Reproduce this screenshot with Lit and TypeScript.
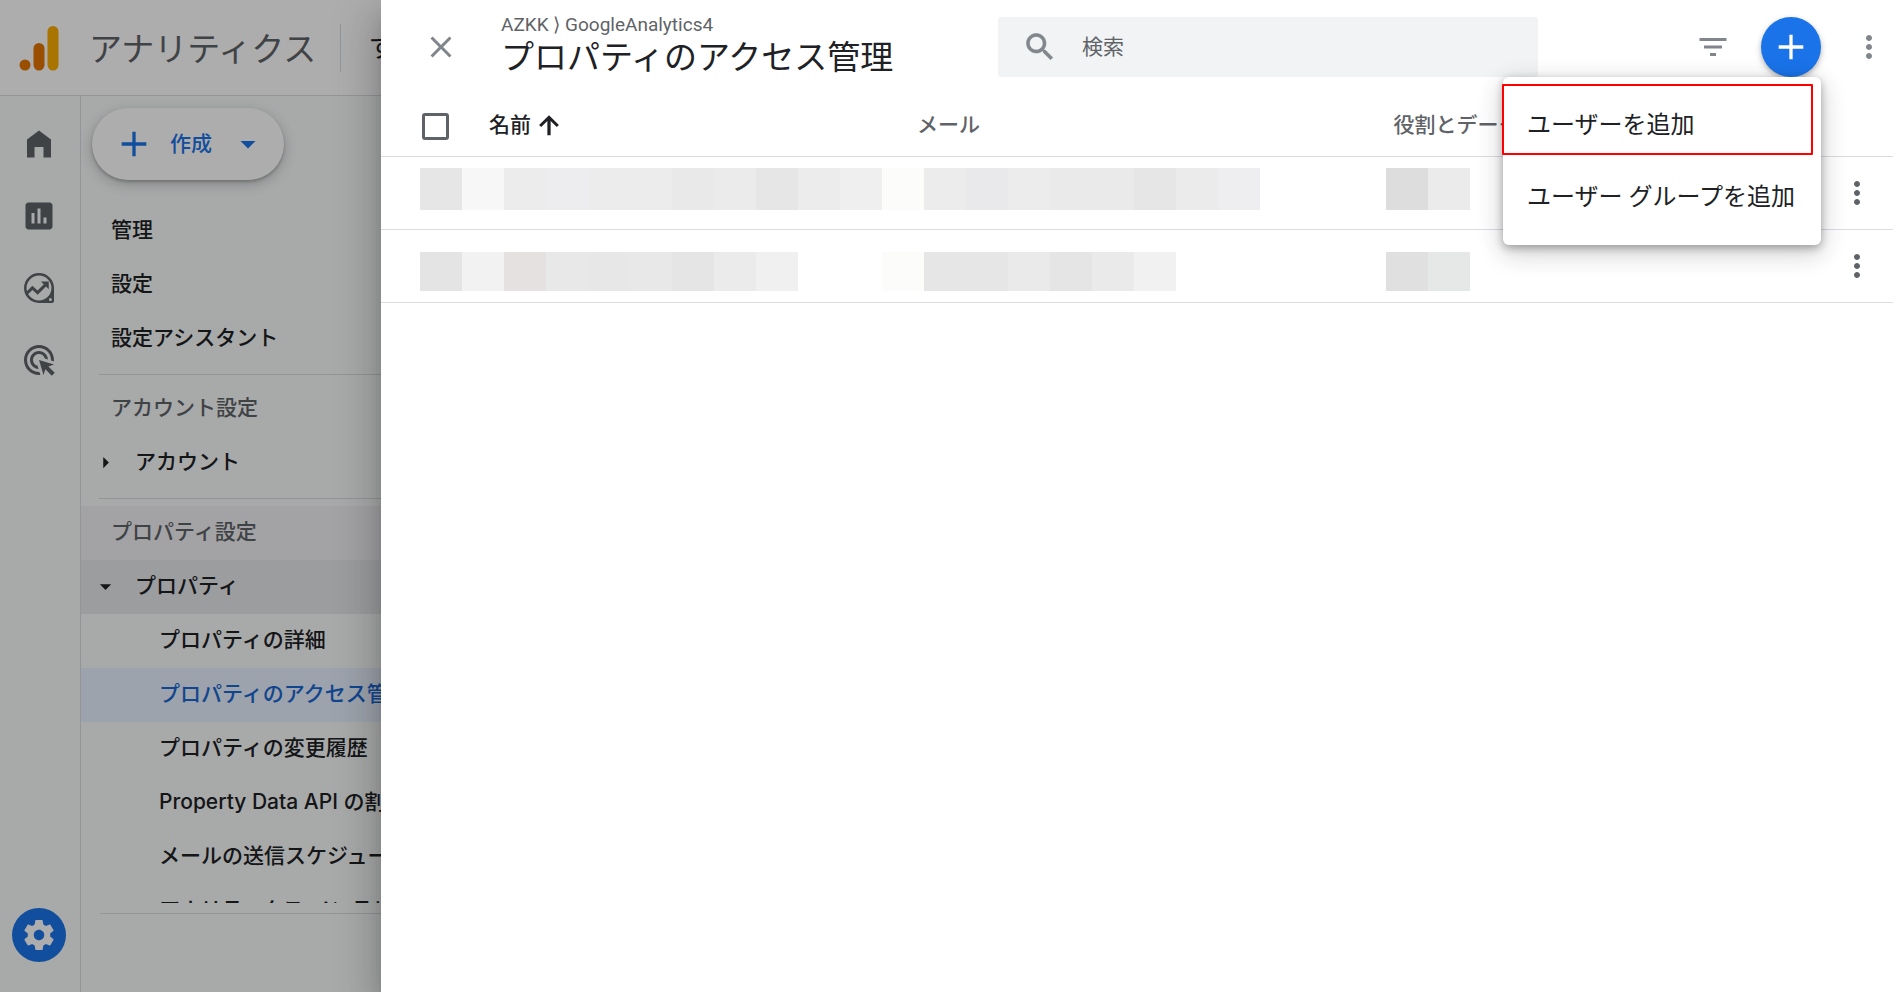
import { LitElement, html, css, svg } from "lit";
import { customElement, property, state } from "lit/decorators.js";
import { classMap } from "lit/directives/class-map.js";
import { styleMap } from "lit/directives/style-map.js";

const ICONS = {
  home: svg`<path d="M4 21V9l8-6 8 6v12h-5v-7H9v7z"/>`,
  reports: svg`<path d="M19 3H5c-1.1 0-2 .9-2 2v14c0 1.1.9 2 2 2h14c1.1 0 2-.9 2-2V5c0-1.1-.9-2-2-2zM9 17H7v-7h2v7zm4 0h-2V7h2v10zm4 0h-2v-4h2v4z"/>`,
  explore: svg`<path fill-rule="evenodd" d="M12 2a10 10 0 0 1 10 10v8.600a1.400 1.400 0 0 1-1.400 1.400H12a10 10 0 0 1 0-20zM12 3.700a8.300 8.300 0 1 0 0 16.600 8.300 8.300 0 0 0 0-16.600zM19.600 18.600a1 1 0 1 0 0 2 1 1 0 0 0 0-2z"/><path d="M4 15.500l3.600-3.600 3.500 3.200 5-5" fill="none" stroke="currentColor" stroke-width="2"/><path d="M13.300 7.700h5.200v5.200z"/>`,
  ads: svg`<path d="M11.71,17.99C8.53,17.84,6,15.22,6,12c0-3.310,2.690-6,6-6c3.220,0,5.840,2.530,5.990,5.710l-2.100-0.630C15.480,9.310,13.890,8,12,8c-2.210,0-4,1.790-4,4c0,1.890,1.310,3.480,3.080,3.890L11.710,17.990z M22,12c0,0.300-0.010,0.600-0.040,0.900l-1.970-0.590C20,12.210,20,12.100,20,12c0-4.420-3.580-8-8-8s-8,3.580-8,8s3.580,8,8,8c0.100,0,0.210,0,0.310-0.010l0.590,1.970C12.600,21.990,12.300,22,12,22C6.480,22,2,17.520,2,12C2,6.480,6.480,2,12,2S22,6.480,22,12z M18.230,16.260L22,15l-10-3l3,10l1.260-3.770l4.270,4.270l1.980-1.980L18.230,16.260z"/>`,
  settings: svg`<path d="M19.43 12.98c.04-.32.07-.64.07-.98s-.03-.66-.07-.98l2.110-1.650c.19-.15.24-.42.12-.64l-2-3.460c-.12-.22-.39-.3-.61-.22l-2.490 1c-.52-.4-1.080-.73-1.690-.98l-.38-2.650C14.460 2.180 14.250 2 14 2h-4c-.25 0-.46.18-.49.42l-.38 2.650c-.61.25-1.170.59-1.690.98l-2.490-1c-.23-.09-.49 0-.61.22l-2 3.460c-.13.22-.07.49.12.64l2.110 1.650c-.04.32-.07.65-.07.98s.03.66.07.98l-2.110 1.650c-.19.15-.24.42-.12.64l2 3.460c.12.22.39.3.61.22l2.490-1c.52.4 1.080.73 1.690.98l.38 2.650c.03.24.24.42.49.42h4c.25 0 .46-.18.49-.42l.38-2.650c.61-.25 1.170-.59 1.690-.98l2.490 1c.23.09.49 0 .61-.22l2-3.460c.12-.22.07-.49-.12-.64l-2.110-1.650zM12 15.500c-1.930 0-3.500-1.570-3.500-3.500s1.570-3.500 3.500-3.500 3.500 1.570 3.500 3.500-1.570 3.500-3.500 3.500z"/>`,
  plus: svg`<path d="M20.200 13.100h-7.100v7.100h-2.200v-7.100H3.800v-2.200h7.100V3.800h2.200v7.100h7.100z"/>`,
  dropdown: svg`<path d="M7 10l5 5 5-5z"/>`,
  close: svg`<path d="M19 6.410L17.590 5 12 10.590 6.410 5 5 6.410 10.590 12 5 17.590 6.410 19 12 13.410 17.590 19 19 17.590 13.410 12z"/>`,
  search: svg`<path d="M15.500 14h-.79l-.28-.27C15.410 12.590 16 11.110 16 9.500 16 5.910 13.090 3 9.500 3S3 5.910 3 9.500 5.910 16 9.500 16c1.610 0 3.090-.59 4.230-1.570l.27.28v.79l5 4.990L20.490 19l-4.990-5zm-6 0C7.010 14 5 11.990 5 9.500S7.010 5 9.500 5 14 7.010 14 9.500 11.990 14 9.500 14z" stroke="currentColor" stroke-width="0.400"/>`,
  filter: svg`<path d="M10 18h4v-2h-4v2zM3 6v2h18V6H3zm3 7h12v-2H6v2z"/>`,
  more: svg`<path d="M12 8c1.100 0 2-.9 2-2s-.9-2-2-2-2 .9-2 2 .9 2 2 2zm0 2c-1.100 0-2 .9-2 2s.9 2 2 2 2-.9 2-2-.9-2-2-2zm0 6c-1.100 0-2 .9-2 2s.9 2 2 2 2-.9 2-2-.9-2-2-2z"/>`,
  sort: svg`<path d="M3.500 12l1.800 1.800 5.300-5.200V20.800h2.800V8.600l5.300 5.200 1.800-1.800L12 3.600z"/>`,
};

type IconName = keyof typeof ICONS;

@customElement("ga-icon")
export class GaIcon extends LitElement {
  @property() name: IconName = "home";
  static styles = css`
    :host { display: inline-flex; flex: none; width: 36px; height: 36px; }
    svg { width: 100%; height: 100%; fill: currentColor; }
  `;
  render() {
    return html`<svg viewBox="0 0 24 24" aria-hidden="true">${ICONS[this.name]}</svg>`;
  }
}

/** A strip of equal blocks that hides private values in the table. */
@customElement("ga-mosaic")
export class GaMosaic extends LitElement {
  @property({ attribute: false }) colors: string[] = [];
  static styles = css`
    :host { display: flex; }
    .block { flex: none; width: 42px; height: 100%; }
  `;
  render() {
    return this.colors.map(
      (c) => html`<span class="block" style=${styleMap({ background: c })}></span>`
    );
  }
}

const base = css`
  * { box-sizing: border-box; }
  button {
    font: inherit; color: inherit; background: none; border: 0;
    padding: 0; margin: 0; cursor: pointer; text-align: left;
  }
  a { color: inherit; text-decoration: none; }
  .icon-button {
    display: inline-flex; align-items: center; justify-content: center;
    width: 48px; height: 48px; border-radius: 50%; flex: none;
  }
`;

@customElement("ga-sidebar")
export class GaSidebar extends LitElement {
  static styles = [
    base,
    css`
      :host { display: flex; flex: 1; min-height: 0; }
      .rail {
        display: flex; flex-direction: column; align-items: center;
        width: 81px; padding: 12px 2px 30px 0; flex: none;
        border-right: 1px solid #dadce0; color: #5f6368;
      }
      .rail a { display: flex; align-items: center; justify-content: center; height: 72px; width: 72px; }
      .rail a.current {
        width: 54px; height: 54px; margin-top: auto;
        border-radius: 50%; background: #1a73e8; color: #fff;
      }
      .nav { display: flex; flex-direction: column; width: 420px; min-height: 0; }
      .create {
        display: flex; align-items: center; flex: none; align-self: flex-start;
        height: 72px; padding: 0 18px 0 24px; margin: 12px 0 24px 11px;
        border-radius: 36px; background: #fff; color: #1a73e8; font-weight: 500;
        box-shadow: 0 2px 3px rgba(60, 64, 67, 0.3), 0 4px 12px 2px rgba(60, 64, 67, 0.2);
      }
      .create .label { padding: 0 18px; }
      .list {
        flex: 1; min-height: 0; overflow: hidden;
        font-family: Inter, "Noto Sans CJK JP", sans-serif;
      }
      .item {
        display: flex; align-items: center; height: 54px; padding: 0 0 2px 30px;
        font-weight: 500; white-space: nowrap;
      }
      .item.heading { color: #5f6368; }
      .item.parent { padding-left: 11px; }
      .item.child { padding-left: 78px; }
      .item.selected { background: #e8f0fe; color: #1967d2; }
      .caret { width: 27px; height: 27px; margin-right: 16px; }
      .caret.closed { transform: rotate(-90deg); }
      .item.heading.active { background: #f1f1f4; }
      .item.parent.active { background: #e6e7ea; }
      .divider { height: 1px; border: 0; margin: 8px 0 7px 18px; background: #dadce0; }
      .foot { flex: none; height: 79px; margin: 10px 0 0 19px; border-top: 1px solid #dadce0; }
    `,
  ];

  private items = [
    "プロパティの詳細",
    "プロパティのアクセス管理",
    "プロパティの変更履歴",
    "Property Data API の割り当て履歴",
    "メールの送信スケジュール",
    "アナリティクス インテリジェンスの検索履歴",
  ];

  render() {
    return html`
      <nav class="rail" aria-label="メイン">
        <a href="#home" aria-label="ホーム"><ga-icon name="home"></ga-icon></a>
        <a href="#reports" aria-label="レポート"><ga-icon name="reports"></ga-icon></a>
        <a href="#explore" aria-label="探索"><ga-icon name="explore"></ga-icon></a>
        <a href="#ads" aria-label="広告"><ga-icon name="ads"></ga-icon></a>
        <a class="current" href="#admin" aria-label="管理"><ga-icon name="settings"></ga-icon></a>
      </nav>
      <nav class="nav" aria-label="管理">
        <button class="create">
          <ga-icon name="plus"></ga-icon><span class="label">作成</span><ga-icon name="dropdown"></ga-icon>
        </button>
        <div class="list">
          <a class="item" href="#admin">管理</a>
          <a class="item" href="#settings">設定</a>
          <a class="item" href="#assistant">設定アシスタント</a>
          <hr class="divider" />
          <div class="item heading">アカウント設定</div>
          <a class="item parent" href="#account">
            <ga-icon class="caret closed" name="dropdown"></ga-icon>アカウント
          </a>
          <hr class="divider" />
          <div class="item heading active">プロパティ設定</div>
          <a class="item parent active" href="#property">
            <ga-icon class="caret" name="dropdown"></ga-icon>プロパティ
          </a>
          ${this.items.map(
            (t, i) => html`<a class=${classMap({ item: true, child: true, selected: i === 1 })} href="#p${i}">${t}</a>`
          )}
        </div>
        <div class="foot"></div>
      </nav>
    `;
  }
}

const ROWS = [
  {
    kind: "first",
    name: ["#e6e6e6", "#f7f7f7", "#ececec", "#ededf0", "#ececec", "#ececec", "#e9e9e9", "#ebebeb", "#e6e6e6", "#ececec", "#efefef", "#fcfcfa"],
    mail: ["#ececed", "#e9e9ec", "#ececec", "#eaeaea", "#eaeaea", "#e6e6e6", "#ebebeb", "#eeeef0"],
    role: ["#dddddd", "#ebebeb"],
  },
  {
    kind: "second",
    name: ["#e4e4e4", "#f2f2f2", "#e5e1e1", "#e8e8e8", "#e7e7e7", "#e8e8e8", "#e5e5e5", "#ebebeb", "#f0f0f0", "#ffffff", "#ffffff", "#fcfcfa"],
    mail: ["#e6e6e6", "#e6e6e6", "#eaeaea", "#e5e5e5", "#eaeaea", "#f1f1f1"],
    role: ["#e0e0e0", "#e6e8e7"],
  },
];

@customElement("ga-access-panel")
export class GaAccessPanel extends LitElement {
  @state() private menuOpen = true;

  static styles = [
    base,
    css`
      :host { display: block; background: #fff; color: #202124; }
      .bar {
        display: grid; align-items: center; height: 94px;
        grid-template-columns: minmax(0, 617fr) minmax(0, 540fr) minmax(0, 361fr);
      }
      .lead { display: flex; align-items: center; gap: 36px; padding-left: 36px; white-space: nowrap; }
      .lead .icon-button, .tools .icon-button { color: #80868b; }
      .crumb { font-size: 19px; line-height: 24px; color: #5f6368; margin: 0; padding-top: 2px; }
      h1 { font-size: 33px; line-height: 42px; font-weight: 400; margin: 0; padding-bottom: 4px; }
      .search {
        display: flex; align-items: center; gap: 24px; height: 60px; padding: 0 24px;
        border-radius: 3px; background: #f1f3f4; color: #80868b;
      }
      .search input {
        flex: 1; min-width: 0; border: 0; outline: 0; padding: 0; background: none;
        font: inherit; color: #202124;
      }
      .search input::placeholder { color: #5f6368; opacity: 1; }
      .tools { display: flex; align-items: center; justify-content: flex-end; gap: 24px; padding-right: 6px; }
      .add {
        display: flex; align-items: center; justify-content: center;
        width: 60px; height: 60px; border-radius: 50%; background: #1a73e8; color: #fff;
        box-shadow: 0 2px 4px rgba(0, 0, 0, 0.2), 0 3px 8px rgba(0, 0, 0, 0.14);
      }
      table { width: calc(100% - 6px); table-layout: fixed; border-collapse: separate; border-spacing: 0; }
      th, td { padding: 0; border-bottom: 1px solid #dadce0; text-align: left; vertical-align: middle; }
      th { height: 63px; color: #5f6368; font-weight: 500; white-space: nowrap; }
      td { height: 73px; }
      .c-check { width: 108px; }
      .c-name { width: 28.3%; }
      .c-mail { width: 31%; }
      .c-more { width: 72px; }
      th.check { padding-left: 41px; }
      th.role { padding-left: 8px; }
      th input {
        display: block; appearance: none; width: 27px; height: 27px; margin: 2px 0 0;
        border: 3px solid #5f6368; border-radius: 3px;
      }
      th input:checked { background: #1a73e8; border-color: #1a73e8; }
      .sort { display: inline-flex; align-items: center; gap: 4px; font-weight: 500; color: #202124; }
      .sort ga-icon { width: 28px; height: 28px; }
      td.name { padding-left: 39px; }
      td.mail { padding-left: 7px; }
      td.more { text-align: center; color: #5f6368; }
      td.more button { vertical-align: middle; }
      tr.first ga-mosaic { height: 42px; margin-bottom: 8px; }
      tr.second ga-mosaic { height: 39px; margin-top: 11px; }
      .menu {
        position: absolute; top: 77px; right: 78px; width: 318px;
        padding: 12px 0; border-radius: 6px; background: #fff; font-size: 24px;
        box-shadow: 0 3px 8px rgba(0, 0, 0, 0.3), 0 8px 24px 3px rgba(0, 0, 0, 0.14), 0 4px 36px rgba(0, 0, 0, 0.04);
      }
      .menu button { display: block; width: 100%; height: 72px; padding: 0 0 0 24px; white-space: nowrap; }
      .frame {
        position: absolute; left: -1px; top: 7px; width: 311px; height: 71px;
        border: 2px solid #ff0000; border-radius: 1px; pointer-events: none;
      }
    `,
  ];

  render() {
    return html`
      <header class="bar">
        <div class="lead">
          <button class="icon-button" aria-label="閉じる"><ga-icon name="close"></ga-icon></button>
          <div>
            <p class="crumb">AZKK ⟩ GoogleAnalytics4</p>
            <h1>プロパティのアクセス管理</h1>
          </div>
        </div>
        <label class="search">
          <ga-icon name="search"></ga-icon>
          <input type="search" placeholder="検索" aria-label="検索" />
        </label>
        <div class="tools">
          <button class="icon-button" aria-label="フィルタ"><ga-icon name="filter"></ga-icon></button>
          <button class="add" aria-label="追加" aria-expanded=${this.menuOpen}
            @click=${() => (this.menuOpen = !this.menuOpen)}><ga-icon name="plus"></ga-icon></button>
          <button class="icon-button" aria-label="その他"><ga-icon name="more"></ga-icon></button>
        </div>
      </header>
      <table>
        <colgroup>
          <col class="c-check" /><col class="c-name" /><col class="c-mail" /><col /><col class="c-more" />
        </colgroup>
        <thead>
          <tr>
            <th class="check"><input type="checkbox" aria-label="すべて選択" /></th>
            <th><button class="sort">名前<ga-icon name="sort"></ga-icon></button></th>
            <th>メール</th>
            <th class="role">役割とデータ制限</th>
            <th></th>
          </tr>
        </thead>
        <tbody>
          ${ROWS.map(
            (r) => html`<tr class=${r.kind}>
              <td class="name" colspan="2"><ga-mosaic .colors=${r.name}></ga-mosaic></td>
              <td class="mail"><ga-mosaic .colors=${r.mail}></ga-mosaic></td>
              <td><ga-mosaic .colors=${r.role}></ga-mosaic></td>
              <td class="more">
                <button class="icon-button" aria-label="その他の操作"><ga-icon name="more"></ga-icon></button>
              </td>
            </tr>`
          )}
        </tbody>
      </table>
      ${this.menuOpen
        ? html`<div class="menu" role="menu">
            <button role="menuitem">ユーザーを追加</button>
            <button role="menuitem">ユーザー グループを追加</button>
            <span class="frame"></span>
          </div>`
        : null}
    `;
  }
}

@customElement("app-root")
export class AppRoot extends LitElement {
  static styles = [
    base,
    css`
      :host {
        display: block; position: relative; height: 100vh; overflow: hidden;
        background: #f8f9fa; color: #202124;
        font: 400 21px/30px Roboto, "Noto Sans CJK JP", sans-serif;
      }
      .page { display: flex; flex-direction: column; height: 100%; }
      .top {
        display: flex; align-items: center; flex: none; height: 96px; padding-left: 18px;
        border-bottom: 1px solid #dadce0; background: #fff; white-space: nowrap;
      }
      .logo { width: 42px; height: 48px; flex: none; }
      .product { font-size: 33px; line-height: 48px; color: #5f6368; padding: 5px 24px 0 29px; }
      .account {
        font-size: 27px; line-height: 48px; padding-left: 27px; border-left: 1px solid #dadce0;
      }
      .scrim { position: absolute; inset: 0; background: rgba(0, 0, 0, 0.32); }
      .panel {
        position: absolute; inset: 0 0 0 381px;
        box-shadow: 0 12px 15px -6px rgba(0, 0, 0, 0.2), 0 24px 36px 3px rgba(0, 0, 0, 0.14),
          0 9px 45px 8px rgba(0, 0, 0, 0.12);
      }
    `,
  ];

  render() {
    return html`
      <div class="page">
        <header class="top">
          <svg class="logo" viewBox="0 0 42 48" aria-hidden="true">
            <circle cx="7" cy="41" r="5.500" fill="#e37400" />
            <rect x="15.500" y="19" width="11" height="27.500" rx="5.500" fill="#e37400" />
            <rect x="29.500" y="2" width="11" height="44.500" rx="5.500" fill="#f9ab00" />
          </svg>
          <span class="product">アナリティクス</span>
          <button class="account">すべてのアカウント</button>
        </header>
        <ga-sidebar></ga-sidebar>
      </div>
      <div class="scrim"></div>
      <ga-access-panel class="panel" role="dialog" aria-label="プロパティのアクセス管理"></ga-access-panel>
    `;
  }
}
